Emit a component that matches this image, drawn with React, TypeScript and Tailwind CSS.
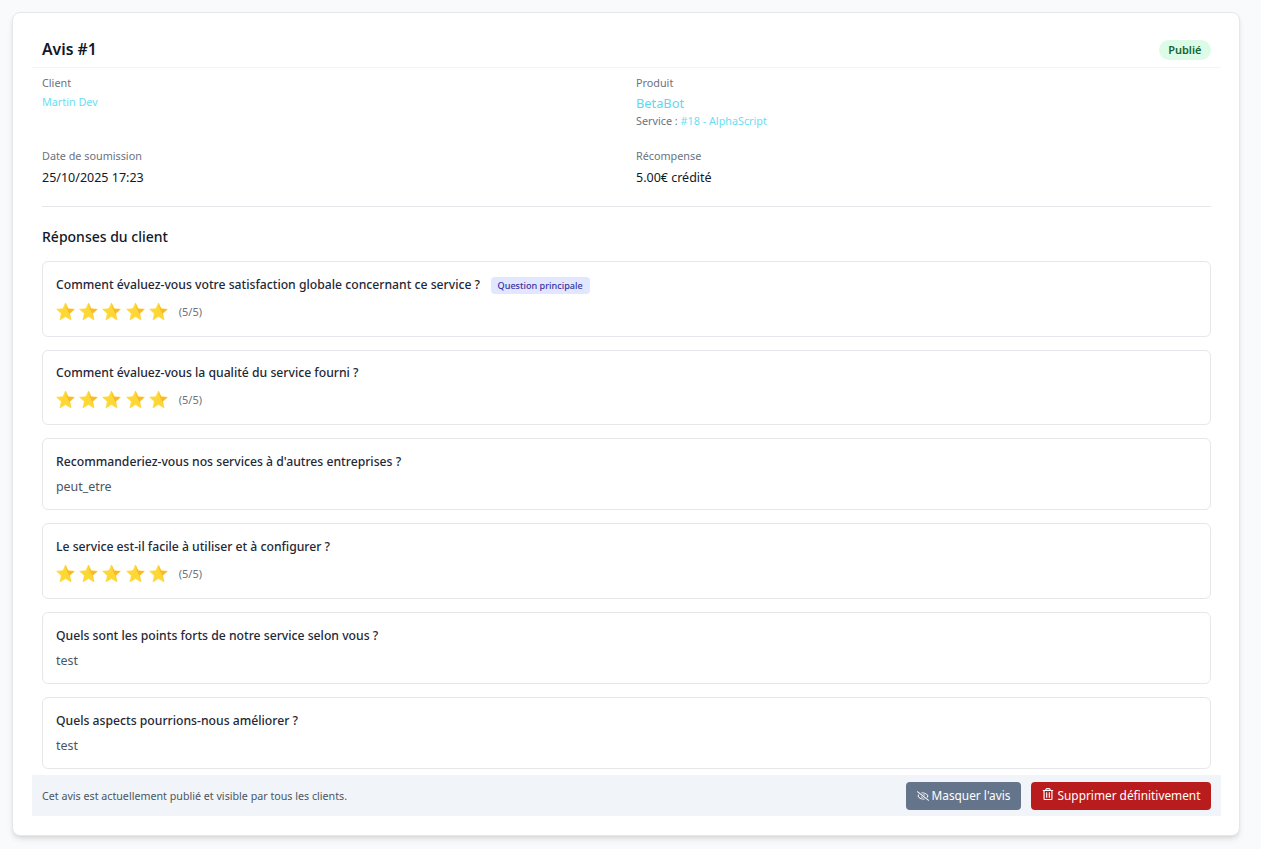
import { FaRegEyeSlash, FaRegTrashAlt } from 'react-icons/fa';

function Stars() {
  return (
    <div className="flex items-center h-[22px] mt-[6.6px]">
      <div className="flex gap-[4.2px]">
        {[0, 1, 2, 3, 4].map((i) => (
          <svg key={i} width="19" height="19" viewBox="0 0 24 24">
            <path
              d="M12 1.2 15.2 8.4 23.2 9.2 17.2 14.5 19 22.6 12 18.4 5 22.6 6.8 14.5 .8 9.2 8.8 8.4Z"
              fill="#fdd835"
              stroke="#fdd835"
              strokeWidth="0.8"
              strokeLinejoin="round"
            />
            <path d="M12 1.2 15.2 8.4 23.2 9.2 17.2 14.5 19 22.6 16.4 14 13.6 8.4Z" fill="#fbb72d" />
          </svg>
        ))}
      </div>
      <span className="ml-[11px] mt-[1px] text-[11px] text-[#6b7280]">(5/5)</span>
    </div>
  );
}

interface Answer {
  question: string;
  text?: string;
  main?: boolean;
}

const answers: Answer[] = [
  { question: 'Comment évaluez-vous votre satisfaction globale concernant ce service ?', main: true },
  { question: 'Comment évaluez-vous la qualité du service fourni ?' },
  { question: "Recommanderiez-vous nos services à d'autres entreprises ?", text: 'peut_etre' },
  { question: 'Le service est-il facile à utiliser et à configurer ?' },
  { question: 'Quels sont les points forts de notre service selon vous ?', text: 'test' },
  { question: 'Quels aspects pourrions-nous améliorer ?', text: 'test' },
];

export default function App() {
  return (
    <div className="min-h-[849px] bg-[#f8fafc] pt-3 pl-3 pr-[21px] font-['Noto_Sans',sans-serif] text-[#111827]">
      <div className="h-[824px] rounded-lg border border-[#e5e7eb] bg-white pl-[19px] pr-[18px] pt-[19px] shadow-md">
        <div className="flex h-[36px] items-center justify-between border-b border-[#f3f4f6] px-[10px]">
          <h1 className="text-[15.8px] font-semibold leading-none">Avis #1</h1>
          <span className="rounded-full bg-[#dcfce7] px-[9.5px] py-[3px] text-[11px] font-semibold leading-[14px] text-[#166534]">
            Publié
          </span>
        </div>

        <div className="grid grid-cols-2">
          <div className="h-[72px] px-[10px] pt-[7px]">
            <div className="text-[10.8px] leading-[15px] text-[#6b7280]">Client</div>
            <a className="mt-[4px] block text-[10.8px] leading-[15px] text-[#67e0f5]">Martin Dev</a>
          </div>
          <div className="h-[72px] pl-[9.5px] pr-[10px] pt-[7px]">
            <div className="text-[10.8px] leading-[15px] text-[#6b7280]">Produit</div>
            <a className="mt-[4px] block text-[12.8px] leading-[18px] text-[#5fd8ee]">BetaBot</a>
            <div className="mt-[1px] text-[10.8px] leading-[15px] text-[#6b7280]">
              Service : <a className="text-[#67e0f5]">#18 - AlphaScript</a>
            </div>
          </div>
          <div className="px-[10px] pt-[8px]">
            <div className="text-[10.8px] leading-[15px] text-[#6b7280]">Date de soumission</div>
            <div className="mt-[6px] text-[12.5px] leading-[18px]">25/10/2025 17:23</div>
          </div>
          <div className="pl-[9.5px] pr-[10px] pt-[8px]">
            <div className="text-[10.8px] leading-[15px] text-[#6b7280]">Récompense</div>
            <div className="mt-[6px] text-[12.5px] leading-[18px]">5.00€ crédité</div>
          </div>
        </div>

        <div className="mx-[10px] mt-[19px] border-t border-[#e5e7eb]" />

        <h2 className="mt-[20px] px-[10px] text-[14px] font-medium leading-[20px]">Réponses du client</h2>

        <div className="mx-[10px] mt-[14px] flex flex-col gap-[13px]">
          {answers.map((a) => (
            <div
              key={a.question}
              className={`rounded-md border border-[#e5e7eb] px-[13px] pt-[13.8px] ${a.text ? 'h-[72px]' : 'h-[75.6px]'}`}
            >
              <div className="flex h-[18px] items-center text-[12.2px] font-medium leading-[18px] text-[#1f2937]">
                {a.question}
                {a.main && (
                  <span className="ml-[10.5px] mt-[2px] rounded bg-[#e0e7ff] px-[7px] py-[1px] text-[9.1px] font-medium leading-[15px] text-[#3730a3]">
                    Question principale
                  </span>
                )}
              </div>
              {a.text ? (
                <div className="mt-[7px] text-[12.4px] leading-[18px] text-[#4b5563]">{a.text}</div>
              ) : (
                <Stars />
              )}
            </div>
          ))}
        </div>

        <div className="mt-[6.3px] flex h-[41px] items-center justify-between bg-[#f1f5f9] px-[10px]">
          <span className="text-[10.7px] text-[#4b5563]">
            Cet avis est actuellement publié et visible par tous les clients.
          </span>
          <div className="flex gap-[10px]">
            <button className="flex h-[28px] w-[115px] items-center justify-center gap-[3px] rounded bg-[#64748b] text-[11.85px] text-white">
              <FaRegEyeSlash size={12} />
              Masquer l'avis
            </button>
            <button className="flex h-[28px] w-[180px] items-center justify-center gap-[4px] rounded bg-[#b91c1c] text-[11.85px] text-white">
              <FaRegTrashAlt size={12} className="-mt-[3px]" />
              Supprimer définitivement
            </button>
          </div>
        </div>
      </div>
    </div>
  );
}
